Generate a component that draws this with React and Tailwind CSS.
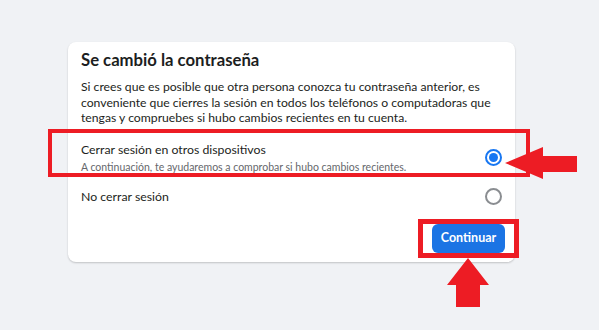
import React, { useState } from 'react';

const font = { fontFamily: 'Lato, "Noto Sans", Arial, sans-serif' };

const Radio = ({ checked }) => (
  <span
    className={`flex items-center justify-center w-[17px] h-[17px] rounded-full border-2 ${checked ? 'border-[#1877f2]' : 'border-[#8a8d91]'}`}
  >
    {checked && <span className="w-[9px] h-[9px] rounded-full bg-[#1877f2]" />}
  </span>
);

export default function App() {
  const [choice, setChoice] = useState('logout');

  return (
    <div className="relative w-[599px] h-[330px] bg-[#f0f2f5] overflow-hidden" style={font}>
      <div className="ml-[68px] pt-[42px] w-[447px]">
        <div className="bg-white rounded-lg shadow-[0_1px_2px_rgba(0,0,0,0.2)] px-[13px] pt-[8px] pb-[9px]">
          <h2 className="text-[16.7px] leading-[20px] font-bold text-[#1c1e21]">Se cambió la contraseña</h2>
          <p className="mt-[9px] text-[12.2px] leading-[15.5px] text-[#1c1e21]">
            Si crees que es posible que otra persona conozca tu contraseña anterior, es conveniente que cierres la sesión en todos los teléfonos o computadoras que tengas y compruebes si hubo cambios recientes en tu cuenta.
          </p>

          <button
            type="button"
            onClick={() => setChoice('logout')}
            className="mt-[15px] w-full flex items-center justify-between text-left"
          >
            <div>
              <div className="text-[12.3px] leading-[18px] text-[#1c1e21]">Cerrar sesión en otros dispositivos</div>
              <div className="mt-px text-[10.5px] leading-[14px] text-[#65676b]">A continuación, te ayudaremos a comprobar si hubo cambios recientes.</div>
            </div>
            <Radio checked={choice === 'logout'} />
          </button>

          <button
            type="button"
            onClick={() => setChoice('stay')}
            className="mt-[14px] w-full flex items-center justify-between text-left"
          >
            <div className="text-[12.3px] leading-[18px] text-[#1c1e21]">No cerrar sesión</div>
            <Radio checked={choice === 'stay'} />
          </button>

          <div className="mt-[18px] flex justify-end -mr-[3px]">
            <button
              type="button"
              className="h-[29px] w-[73px] rounded-md bg-[#1b74e4] text-white text-[12.5px] font-bold"
            >
              Continuar
            </button>
          </div>
        </div>
      </div>

      {/* annotations */}
      <div className="absolute left-[48px] top-[129px] w-[482px] h-[48px] border-4 border-[#ed1c24] pointer-events-none" />
      <div className="absolute left-[418px] top-[219px] w-[101px] h-[39px] border-[5px] border-[#ed1c24] pointer-events-none" />

      <svg className="absolute left-0 top-0 pointer-events-none" width="599" height="330">
        <polygon points="505,163 543,147 543,156 577,156 577,172 543,172 543,179" fill="#ed1c24" />
        <polygon points="468,258 489,285 480,285 480,307 456,307 456,285 447,285" fill="#ed1c24" />
      </svg>
    </div>
  );
}
